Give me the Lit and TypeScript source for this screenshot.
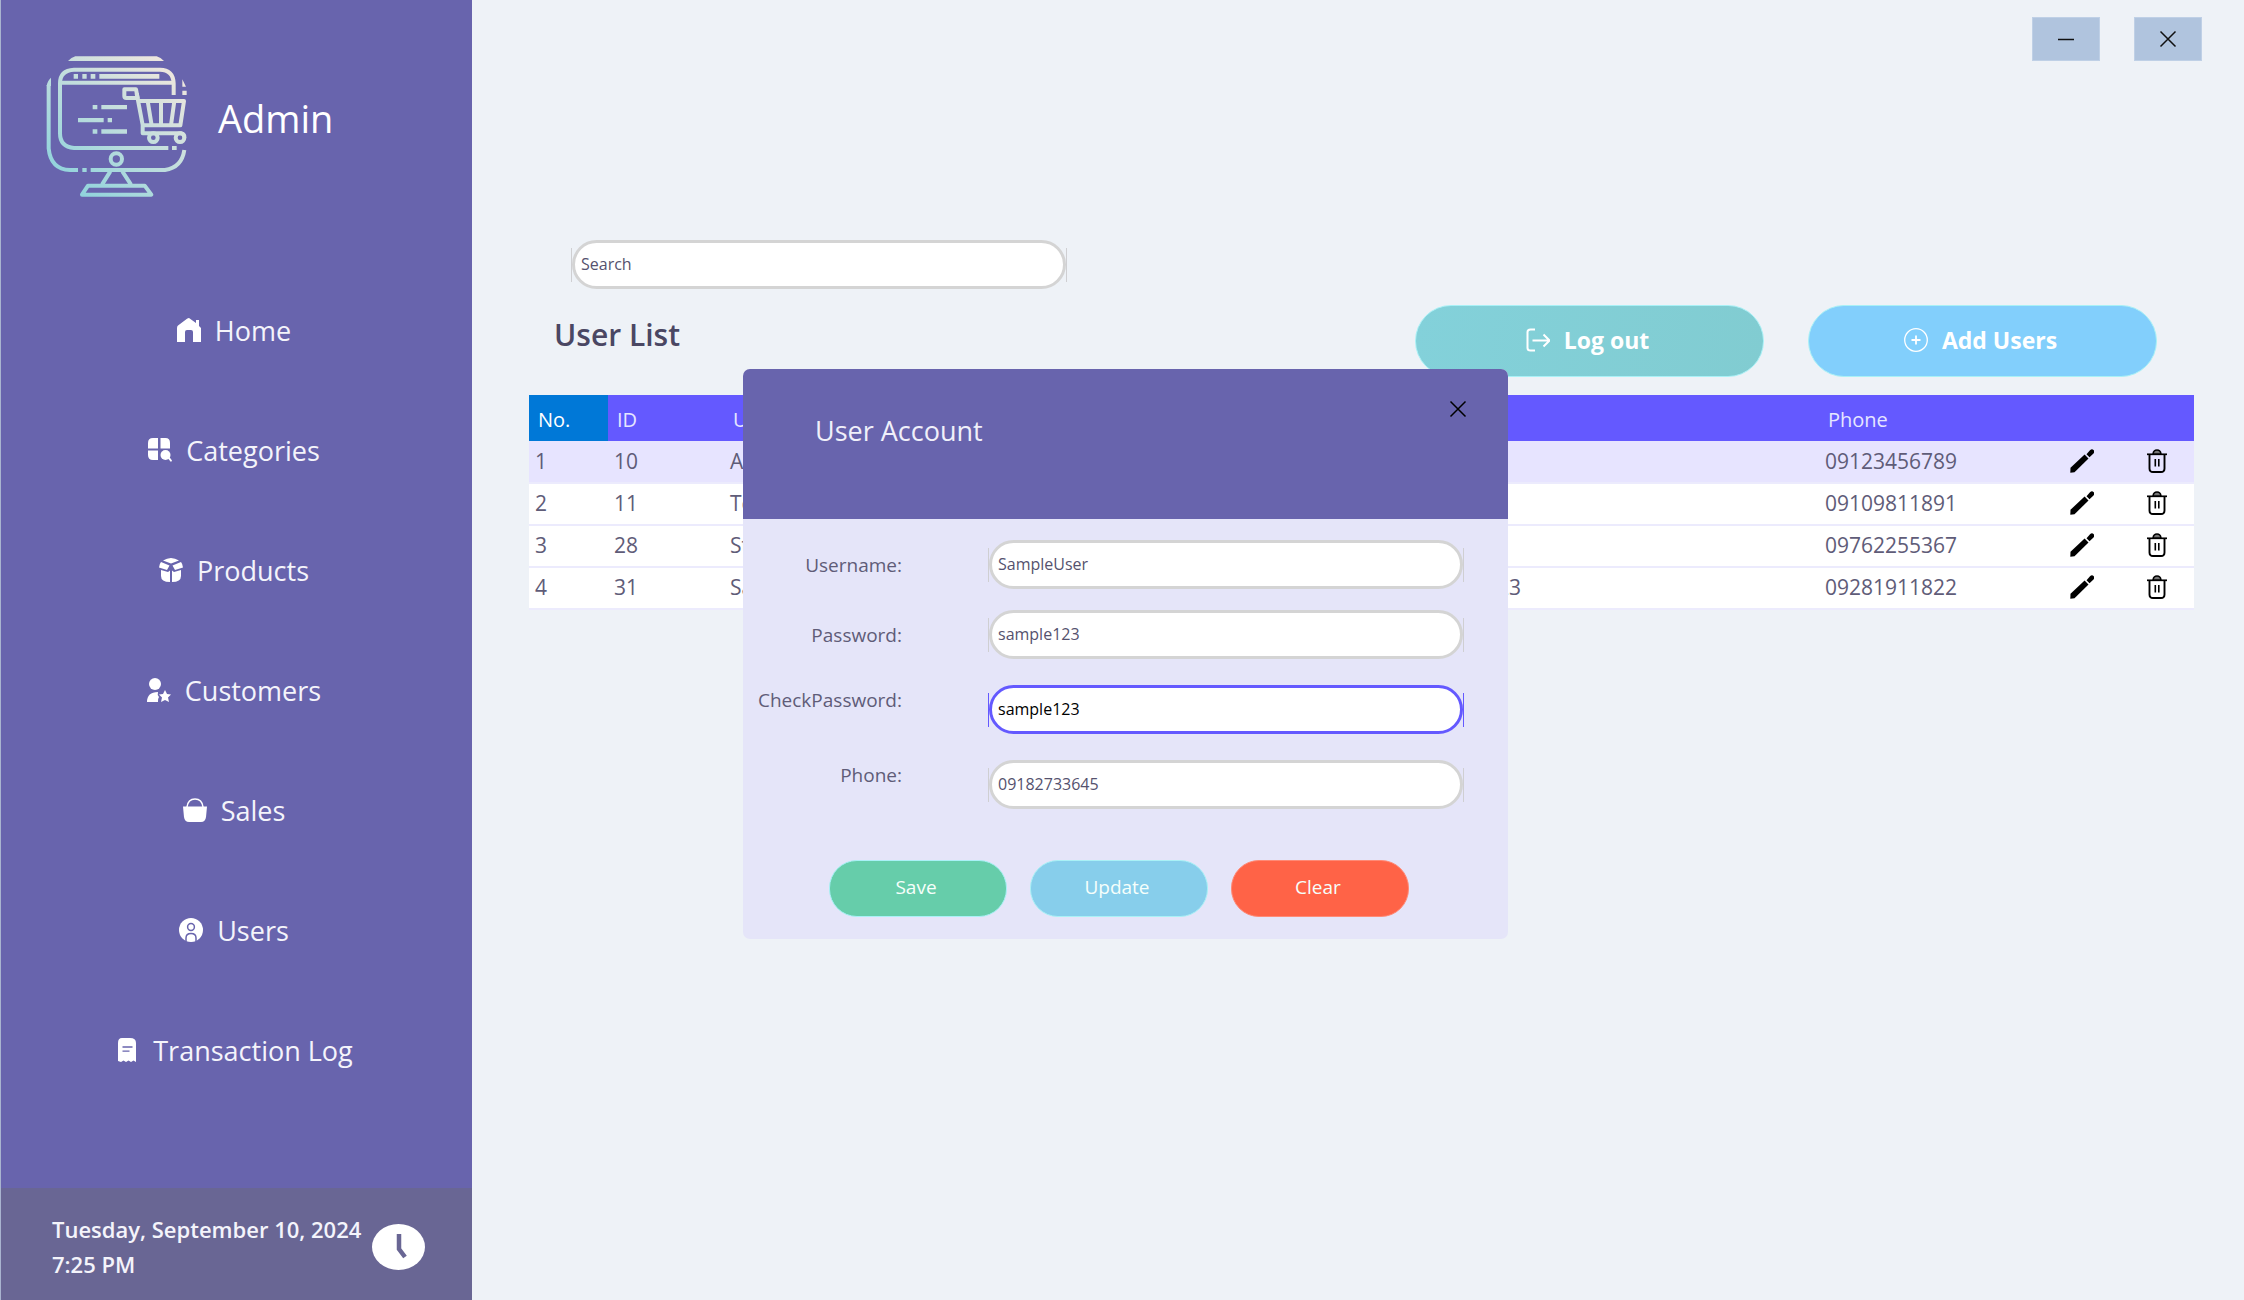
import { LitElement, html, css, svg } from "lit";
import { customElement } from "lit/decorators.js";
import { classMap } from "lit/directives/class-map.js";

const icons = {
  home: svg`<path fill="currentColor" d="M12 0 19 5V2h3v6l2 2v14h-8V14q0-2-2-2h-4q-2 0-2 2v10H0V10q0-1.600 1-2.400L10 .8q1-.8 2-.8z"/>`,
  categories: svg`<g fill="currentColor"><path d="M5 0h5v10.500H0V5Q0 0 5 0zM12.500 0h5Q22 0 22 5v5.500h-9.500zM0 12.500h10V22H5q-5 0-5-5z"/><circle cx="17.500" cy="17" r="5"/><path d="m19.500 20 1.500-1.500 3 4-1 1.500z"/></g>`,
  products: svg`<g fill="currentColor"><path d="M12 0q4 .5 8 2.400L12 5.400 4 2.400Q8 .5 12 0zM2 4l8.500 3.400L8 12 0 9.500Q.3 6 2 4zM22 4l-8.500 3.400L16 12l8-2.500Q23.700 6 22 4zM2 12l7 2 2-1.500V24Q2 24 2 18zM22 12l-7 2-2-1.500V24q9 0 9-6z"/></g>`,
  customers: svg`<g fill="currentColor"><circle cx="8" cy="6" r="6"/><path d="M0 24q0-10 11-10-1 3 1 5-1.500 2-1 5zM18 12l2 4 4 .5-3 3 1 4.500-4-2-4 2 1-4.500-3-3 4-.5z"/></g>`,
  sales: svg`<path d="M4 9Q5 1 12 1t8 8" fill="none" stroke="currentColor" stroke-width="1.500"/><path fill="currentColor" d="M0 8.500h24L23 19q-.6 5-5 5H6q-4.400 0-5-5z"/>`,
  users: svg`<circle cx="12" cy="12" r="12" fill="currentColor"/><circle cx="12" cy="9" r="3.400" fill="none" stroke="#6864ad" stroke-width="1.500"/><path d="M7 24v-4q0-4.500 5-4.500t5 4.500v4" fill="none" stroke="#6864ad" stroke-width="1.500"/>`,
  log: svg`<path fill="currentColor" d="M7 0h8q6 0 6 5v19l-2.500-1.500L16 24l-2.500-1.500L11 24l-2.500-1.500L6 24l-3-1V5q0-5 4-5z"/><path d="M7.500 9h10M7.500 13.200h7" stroke="#6864ad" stroke-width="1.300" fill="none"/>`,
  logout: svg`<path d="M9 1.500H4.500Q1.500 1.500 1.500 4v16q0 2.500 3 2.500H9M6.500 12.500h17M17.500 6.500l6 6-6 6" fill="none" stroke="currentColor" stroke-width="2"/>`,
  add: svg`<circle cx="12" cy="12" r="11.300" fill="none" stroke="currentColor" stroke-width="1.300"/><path d="M12 7.500v9M7.500 12h9" stroke="currentColor" stroke-width="1.800"/>`,
  minimise: svg`<path d="M4 12.500h16" stroke="currentColor" stroke-width="1.500"/>`,
  close: svg`<path d="M4.500 4.500l15 15M19.500 4.500l-15 15" stroke="currentColor" stroke-width="1.500"/>`,
  edit: svg`<g fill="currentColor"><path d="M.3 23.700l.2-5L14.600 5.500l3.900 3.900L4.500 23.300z"/><path d="M16.500 5.200 20 1.300q2-1.800 3.500-.2t0 3.400l-4 3.800z"/></g>`,
  trash: svg`<path d="M2 5.300h20" stroke="currentColor" stroke-width="1.700"/><path d="M8 5q.5-4 4-4t4 4z" fill="#777" stroke="currentColor" stroke-width="1.500"/><path d="M4.500 5v14.500q0 3.500 3.500 3.500h8q3.500 0 3.500-3.500V5" fill="none" stroke="currentColor" stroke-width="1.900"/><path d="M10.300 10v7.500M13.800 10v7.500" stroke="currentColor" stroke-width="1.600"/>`,
};

const icon = (name: keyof typeof icons) =>
  html`<svg class="icon" viewBox="0 0 24 24" aria-hidden="true">${icons[name]}</svg>`;

const navItems: { label: string; icon: keyof typeof icons }[] = [
  { label: "Home", icon: "home" },
  { label: "Categories", icon: "categories" },
  { label: "Products", icon: "products" },
  { label: "Customers", icon: "customers" },
  { label: "Sales", icon: "sales" },
  { label: "Users", icon: "users" },
  { label: "Transaction Log", icon: "log" },
];

const users = [
  { id: 10, name: "Admin", password: "pass1234", phone: "09123456789" },
  { id: 11, name: "Test", password: "test", phone: "09109811891" },
  { id: 28, name: "Staff", password: "user1234", phone: "09762255367" },
  { id: 31, name: "SampleUser", password: "sample123", phone: "09281911822" },
];

const fields = [
  { id: "username", label: "Username:", value: "SampleUser" },
  { id: "password", label: "Password:", value: "sample123" },
  { id: "check", label: "CheckPassword:", value: "sample123", tall: true, active: true },
  { id: "phone", label: "Phone:", value: "09182733645", tall: true },
];

const shared = css`
  * { box-sizing: border-box; }
  button, input { font: inherit; color: inherit; margin: 0; }
  button { cursor: pointer; }
  .icon { width: 24px; height: 24px; flex: none; display: block; }
  .pill {
    display: flex;
    align-items: center;
    height: 49px;
  }
  .pill::before, .pill::after {
    content: "";
    width: 1px;
    height: 34px;
    background: #cfcfd2;
  }
  .pill input {
    flex: 1;
    min-width: 0;
    height: 49px;
    padding: 0 6px 1px;
    border: 3px solid #d4d4d4;
    border-radius: 25px;
    background: #fff;
    color: #55526e;
    font-size: 16px;
    outline: none;
  }
  .pill input::placeholder { color: #55526e; opacity: 1; }
  .pill.active::before, .pill.active::after { background: #6459ff; }
  .pill.active input { border-color: #6459ff; color: #000; }
`;

@customElement("side-bar")
export class SideBar extends LitElement {
  static styles = [shared, css`
    :host {
      display: flex;
      flex-direction: column;
      flex: none;
      box-sizing: border-box;
      width: 472px;
      background: #6864ad;
      border-left: 1px solid #a9b4cf;
      color: #f4f4fb;
    }
    .brand {
      display: flex;
      align-items: center;
      gap: 30px;
      padding: 55px 45px 72px;
    }
    .logo { width: 142px; height: 143px; flex: none; }
    .brand-name {
      margin: 0;
      padding-bottom: 18px;
      font-size: 38px;
      line-height: 48px;
      font-weight: 400;
      color: #fff;
    }
    .nav { display: flex; flex-direction: column; padding-right: 5px; }
    .nav-link {
      display: flex;
      align-items: center;
      justify-content: center;
      gap: 14px;
      height: 120px;
      font-size: 27px;
      color: inherit;
      text-decoration: none;
    }
    .nav-link .icon { color: #fff; }
    .foot {
      display: flex;
      align-items: center;
      gap: 4px;
      margin-top: auto;
      height: 112px;
      padding: 6px 47px 0 51px;
      background: #696694;
      font-size: 22px;
      font-weight: 600;
      line-height: 35px;
      white-space: nowrap;
    }
    .date { flex: 1; }
    .clock { width: 53px; height: 46px; flex: none; }
  `];

  render() {
    return html`
      <header class="brand">
        <svg class="logo" viewBox="138 165 426 429" aria-hidden="true">
          <defs>
            <linearGradient id="tint" gradientUnits="userSpaceOnUse" x1="190" y1="550" x2="500" y2="190">
              <stop offset="0" stop-color="#8fd3dc" />
              <stop offset="1" stop-color="#efe7de" />
            </linearGradient>
          </defs>
          <g fill="url(#tint)">
            <path d="M204 183 Q214 173 226 169H470Q482 173 492 183z" />
            <path d="M140 258Q142 243 153 233V258z" />
            <path d="M547 238 558 260H547zM547 272h13v13h-13zM516 438h14v12h-14zM247 504h13v12h-13z" />
            <path d="M221 222h13v14h-13zM247 222h13v14h-13zM272 222h14v14h-14zM298 222h180v14H298z" />
            <path d="M278 315h14v13h-14zM304 315h77v13h-77zM234 354h77v13h-77zM323 354h13v13h-13zM278 388h14v13h-14zM304 388h77v13h-77z" />
          </g>
          <g fill="none" stroke="url(#tint)" stroke-width="12">
            <path d="M146 255V445Q152 508 210 510H234M272 510H495Q545 503 553 450" />
            <path d="M521 285V250Q519 209 480 209H222Q180 211 180 250V400Q180 441 222 444H505" />
            <path d="M180 248.010L521 248" />
            <path d="M373 268H408L413 294H379Q373 294 373 288z" stroke-linejoin="round" />
            <path d="M410 280 428 375V400H545Q554 402 553 413" stroke-linejoin="round" />
            <path d="M414 303H552L541 376H425M443 303 455 376M483 303L483.010 376M523 303 513 376" stroke-linejoin="round" />
            <circle cx="460" cy="413" r="13" />
            <circle cx="540" cy="413" r="13" />
            <circle cx="349" cy="477" r="17" />
            <path d="M331 514 306 554M367 514 393 554" />
            <path d="M264 557H434L454 584H246z" stroke-linejoin="round" />
          </g>
        </svg>
        <h1 class="brand-name">Admin</h1>
      </header>
      <nav class="nav" aria-label="Main">
        ${navItems.map((item) => html`<a class="nav-link" href="#">${icon(item.icon)}<span>${item.label}</span></a>`)}
      </nav>
      <footer class="foot">
        <div class="date">Tuesday, September 10, 2024<br />7:25 PM</div>
        <svg class="clock" viewBox="0 0 53 46" aria-hidden="true">
          <ellipse cx="26.500" cy="23" rx="26.500" ry="23" fill="#fff" />
          <path d="M27 10V25L33 33" fill="none" stroke="#696694" stroke-width="4.500" />
        </svg>
      </footer>
    `;
  }
}

@customElement("user-list")
export class UserList extends LitElement {
  static styles = [shared, css`
    :host { display: block; flex: 1; min-width: 0; }
    .window-controls {
      display: flex;
      justify-content: flex-end;
      gap: 34px;
      padding: 17px 42px 0;
    }
    .window-button {
      display: grid;
      place-items: center;
      width: 68px;
      height: 44px;
      padding: 0;
      border: 1px solid #bfd0e6;
      background: #b0c4de;
      color: #111;
    }
    .search { width: 496px; margin: 179px 0 0 99px; }
    .toolbar {
      display: flex;
      align-items: flex-start;
      gap: 44px;
      padding: 16px 87px 18px 82px;
    }
    .title {
      flex: 1;
      margin: 0;
      font-size: 30px;
      line-height: 60px;
      font-weight: 600;
      color: #4a4763;
    }
    .action {
      display: flex;
      align-items: center;
      justify-content: center;
      gap: 14px;
      width: 349px;
      height: 72px;
      padding: 0 4px 2px 0;
      border: 1px solid #a9f1f6;
      border-radius: 36px;
      color: #fff;
      font-size: 23px;
      font-weight: 700;
    }
    .logout { background: linear-gradient(100deg, #83d1da, #81ccd1); }
    .add { background: #82cffc; }
    .table-wrap { padding: 0 50px 0 57px; }
    table {
      width: 100%;
      table-layout: fixed;
      border-collapse: collapse;
      font-size: 21px;
      color: #5f5c78;
    }
    th {
      height: 46px;
      padding: 3px 9px 0;
      background: #6459ff;
      color: #e6e6ff;
      font-size: 20px;
      font-weight: 400;
      text-align: left;
    }
    th.selected { background: #0078d7; color: #fff; }
    td {
      height: 42px;
      padding: 0 6px 2px;
      background: #fff;
      border-bottom: 2px solid #ecebfd;
      line-height: 28px;
    }
    tr.current td { background: #e7e4ff; }
    .col-no { width: 79px; }
    .col-id { width: 116px; }
    .col-password { width: 411px; }
    .col-phone { width: 225px; }
    .col-icon { width: 75px; }
    .icon-button {
      display: block;
      margin: 0 auto;
      padding: 0;
      border: 0;
      background: none;
      color: #000;
    }
  `];

  render() {
    return html`
      <div class="window-controls">
        <button class="window-button" aria-label="Minimize">${icon("minimise")}</button>
        <button class="window-button" aria-label="Close">${icon("close")}</button>
      </div>
      <div class="pill search"><input type="search" placeholder="Search" aria-label="Search" /></div>
      <div class="toolbar">
        <h2 class="title">User List</h2>
        <button class="action logout">${icon("logout")}Log out</button>
        <button class="action add">${icon("add")}Add Users</button>
      </div>
      <div class="table-wrap">
        <table>
          <colgroup>
            <col class="col-no" /><col class="col-id" /><col /><col class="col-password" />
            <col class="col-phone" /><col class="col-icon" /><col class="col-icon" />
          </colgroup>
          <thead>
            <tr>
              <th class="selected">No.</th><th>ID</th><th>User</th><th>Pass</th><th>Phone</th><th></th><th></th>
            </tr>
          </thead>
          <tbody>
            ${users.map((user, i) => html`
              <tr class=${classMap({ current: i === 0 })}>
                <td>${i + 1}</td>
                <td>${user.id}</td>
                <td>${user.name}</td>
                <td>${user.password}</td>
                <td>${user.phone}</td>
                <td><button class="icon-button" aria-label="Edit">${icon("edit")}</button></td>
                <td><button class="icon-button" aria-label="Delete">${icon("trash")}</button></td>
              </tr>`)}
          </tbody>
        </table>
      </div>
    `;
  }
}

@customElement("account-dialog")
export class AccountDialog extends LitElement {
  static styles = [shared, css`
    :host {
      display: block;
      width: 765px;
      height: 570px;
      border-radius: 7px;
      overflow: hidden;
      background: #e5e5f9;
      color: #5f5c78;
    }
    .head {
      display: flex;
      justify-content: space-between;
      align-items: flex-start;
      height: 150px;
      padding: 28px 38px 0 72px;
      background: #6864ad;
      color: #f0f0fa;
    }
    .head-title {
      margin: 0;
      padding-top: 14px;
      font-size: 27px;
      line-height: 40px;
      font-weight: 400;
    }
    .close {
      padding: 0;
      border: 0;
      background: none;
      color: #000;
    }
    .form {
      display: flex;
      flex-direction: column;
      gap: 21px;
      padding: 21px 44px 0 0;
    }
    .field {
      display: grid;
      grid-template-columns: 159px 1fr;
      column-gap: 86px;
      align-items: center;
    }
    .field.tall { align-items: start; margin-top: 5px; }
    label {
      justify-self: end;
      font-size: 19px;
      line-height: 30px;
    }
    .buttons {
      display: flex;
      gap: 23px;
      margin-top: 30px;
      padding-left: 86px;
    }
    .submit {
      width: 178px;
      height: 57px;
      padding: 0 4px 3px 0;
      border: 1px solid #a9f1f6;
      border-radius: 28px;
      color: #f6fffb;
      font-size: 19px;
      font-weight: 500;
    }
    .save { background: #66cdaa; }
    .update { background: #87ceeb; }
    .clear { background: #ff6347; border-color: #ff8a76; }
  `];

  render() {
    return html`
      <header class="head">
        <h2 class="head-title">User Account</h2>
        <button class="close" aria-label="Close">${icon("close")}</button>
      </header>
      <form class="form" @submit=${(e: Event) => e.preventDefault()}>
        ${fields.map((f) => html`
          <div class=${classMap({ field: true, tall: !!f.tall })}>
            <label for=${f.id}>${f.label}</label>
            <div class=${classMap({ pill: true, active: !!f.active })}>
              <input id=${f.id} type="text" .value=${f.value} />
            </div>
          </div>`)}
        <div class="buttons">
          <button class="submit save">Save</button>
          <button class="submit update" type="button">Update</button>
          <button class="submit clear" type="button">Clear</button>
        </div>
      </form>
    `;
  }
}

@customElement("app-root")
export class AppRoot extends LitElement {
  static styles = css`
    :host {
      display: flex;
      position: relative;
      min-height: 100vh;
      background: #eef2f7;
      font-family: "Open Sans", "Noto Sans", sans-serif;
    }
    .overlay {
      position: absolute;
      inset: 0;
      display: grid;
      place-items: center;
      padding: 8px 0 0 7px;
    }
  `;

  render() {
    return html`
      <side-bar></side-bar>
      <user-list></user-list>
      <div class="overlay"><account-dialog role="dialog" aria-label="User Account"></account-dialog></div>
    `;
  }
}
